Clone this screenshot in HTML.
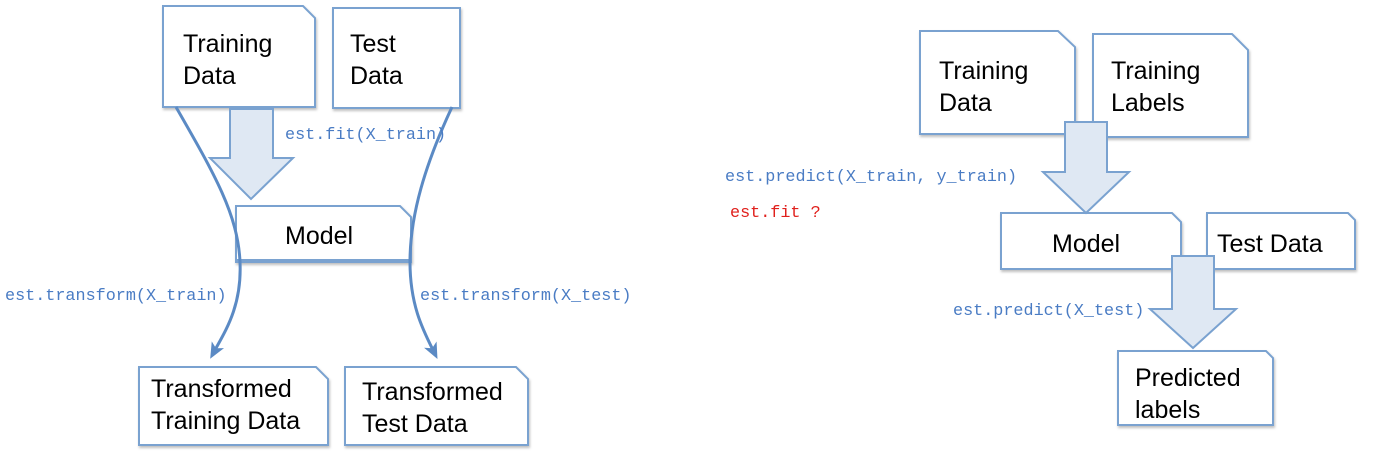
<!DOCTYPE html>
<html><head><meta charset="utf-8"><style>
html,body{margin:0;padding:0;background:#fff;width:1376px;height:456px;overflow:hidden}
.b text{font-family:"Liberation Sans",sans-serif;font-size:25px;fill:#000}
.m text{font-family:"Liberation Mono",monospace;font-size:16.8px;fill:#4a7cc4}
</style></head><body>
<svg width="1376" height="456" viewBox="0 0 1376 456" xmlns="http://www.w3.org/2000/svg">
<defs>
<filter id="s" x="-5%" y="-5%" width="115%" height="120%"><feDropShadow dx="1" dy="2" stdDeviation="1.2" flood-color="#000" flood-opacity="0.25"/></filter>
<marker id="ah" markerWidth="16" markerHeight="16" refX="6" refY="8" orient="auto" markerUnits="userSpaceOnUse"><path d="M0,1 L16,8 L0,15 L4,8 Z" fill="#5b8ac4"/></marker>
</defs>
<g fill="#fff" stroke="#7aa2d0" stroke-width="2" filter="url(#s)">
<path d="M163,6 H303 L315,18 V107 H163 Z"/>
<path d="M333,8 H460 V108 H333 Z"/>
<path d="M236,206 H400 L411,217 V262 H236 Z"/>
<path d="M139,367 H316 L328,379 V445 H139 Z"/>
<path d="M345,367 H516 L528,379 V445 H345 Z"/>
<path d="M920,31 H1058 L1075,47 V134 H920 Z"/>
<path d="M1093,34 H1232 L1248,50 V137 H1093 Z"/>
<path d="M1001,213 H1172 L1181,222 V269 H1001 Z"/>
<path d="M1207,213 H1348 L1355,220 V269 H1207 Z"/>
<path d="M1118,351 H1266 L1273,358 V425 H1118 Z"/>
</g>
<g fill="#dfe8f3" stroke="#7aa2d0" stroke-width="2">
<path d="M230,109 H273 V158 H293 L251,199 L210,158 H230 Z"/>
<path d="M1065,122 H1107 V172 H1129 L1086,213 L1043,172 H1065 Z"/>
<path d="M1172,256 H1214 V309 H1236 L1193,348 L1150,309 H1172 Z"/>
</g>
<line x1="236" y1="260" x2="411" y2="260" stroke="#7aa2d0" stroke-width="2"/>
<g fill="none" stroke="#5b8ac4" stroke-width="3">
<path d="M176,107 C215,175 238,215 240,262 C242,305 226,330 215,350" marker-end="url(#ah)"/>
<path d="M452,107 C425,165 410,215 410,262 C410,305 423,330 433,350" marker-end="url(#ah)"/>
</g>
<g class="b">
<text x="183" y="52">Training</text><text x="183" y="84">Data</text>
<text x="350" y="52">Test</text><text x="350" y="84">Data</text>
<text x="285" y="244">Model</text>
<text x="151" y="397">Transformed</text><text x="151" y="429">Training Data</text>
<text x="362" y="400">Transformed</text><text x="362" y="432">Test Data</text>
<text x="939" y="79">Training</text><text x="939" y="111">Data</text>
<text x="1111" y="79">Training</text><text x="1111" y="111">Labels</text>
<text x="1052" y="252">Model</text>
<text x="1217" y="252">Test Data</text>
<text x="1135" y="386">Predicted</text><text x="1135" y="418">labels</text>
</g>
<g class="m">
<text x="285" y="139">est.fit(X_train)</text>
<text x="5" y="300">est.transform(X_train)</text>
<text x="420" y="300">est.transform(X_test)</text>
<text x="725" y="181">est.predict(X_train, y_train)</text>
<text x="730" y="217" style="fill:#e0201c">est.fit ?</text>
<text x="953" y="315">est.predict(X_test)</text>
</g>
</svg>
</body></html>
